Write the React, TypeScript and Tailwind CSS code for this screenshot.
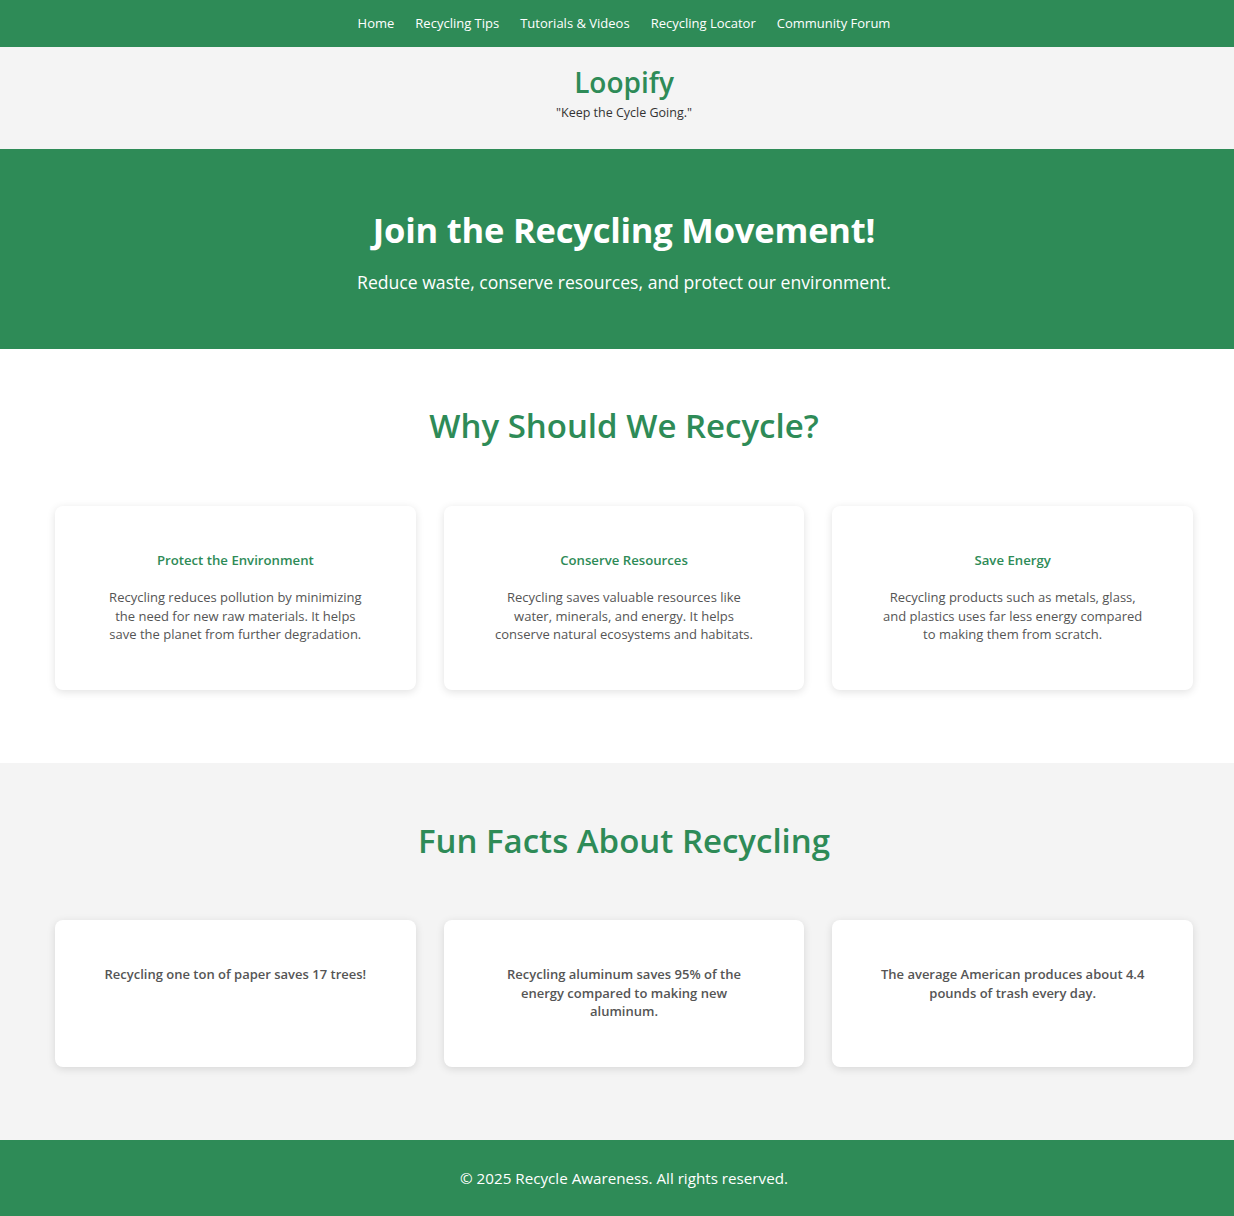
import React from "react";

const font = { fontFamily: '"Open Sans", "Noto Sans", sans-serif' };

const why = [
  {
    t: "Protect the Environment",
    l: ["Recycling reduces pollution by minimizing", "the need for new raw materials. It helps", "save the planet from further degradation."],
  },
  {
    t: "Conserve Resources",
    l: ["Recycling saves valuable resources like", "water, minerals, and energy. It helps", "conserve natural ecosystems and habitats."],
  },
  {
    t: "Save Energy",
    l: ["Recycling products such as metals, glass,", "and plastics uses far less energy compared", "to making them from scratch."],
  },
];

const facts = [
  ["Recycling one ton of paper saves 17 trees!"],
  ["Recycling aluminum saves 95% of the", "energy compared to making new", "aluminum."],
  ["The average American produces about 4.4", "pounds of trash every day."],
];

export default function App() {
  return (
    <div style={font} className="w-full overflow-x-hidden bg-white text-[#333]">
      <div className="w-[1248px]">
        <nav className="h-[47px] bg-[#2e8b57] flex items-center justify-center gap-[21px] text-white text-[13px] font-medium">
          {["Home", "Recycling Tips", "Tutorials & Videos", "Recycling Locator", "Community Forum"].map((n) => (
            <a key={n} href="#" className="leading-none">{n}</a>
          ))}
        </nav>
        <header className="h-[102px] bg-[#f4f4f4] flex flex-col items-center pt-[17px]">
          <h1 className="text-[28px] font-semibold text-[#2e8b57] leading-[36px]">Loopify</h1>
          <p className="text-[12.5px] text-[#333] mt-[4px] leading-[18px]">"Keep the Cycle Going."</p>
        </header>
        <section className="h-[200px] bg-[#2e8b57] flex flex-col items-center text-white pt-[59px]">
          <h2 className="text-[34.5px] font-bold leading-[44px] tracking-[-0.2px]">Join the Recycling Movement!</h2>
          <p className="text-[17.6px] mt-[18px] leading-[24px]">Reduce waste, conserve resources, and protect our environment.</p>
        </section>
        <section className="h-[414px] bg-white flex flex-col items-center pt-[56px] px-[55px]">
          <h2 className="text-[33px] font-semibold text-[#2e8b57] leading-[42px]">Why Should We Recycle?</h2>
          <div className="w-full grid grid-cols-3 gap-[28px] mt-[59px]">
            {why.map((c) => (
              <div key={c.t} className="h-[184px] bg-white rounded-[8px] shadow-[0_2px_8px_rgba(0,0,0,0.12)] flex flex-col items-center pt-[45px]">
                <h3 className="text-[13.2px] font-semibold text-[#2e8b57] leading-[18px]">{c.t}</h3>
                <p className="text-[13px] text-[#555] leading-[18.5px] mt-[19px] text-center">
                  {c.l.map((x) => (
                    <span key={x} className="block">{x}</span>
                  ))}
                </p>
              </div>
            ))}
          </div>
        </section>
        <section className="h-[377px] bg-[#f4f4f4] flex flex-col items-center pt-[57px] px-[55px]">
          <h2 className="text-[33px] font-semibold text-[#2e8b57] leading-[42px]">Fun Facts About Recycling</h2>
          <div className="w-full grid grid-cols-3 gap-[28px] mt-[58px]">
            {facts.map((f, i) => (
              <div key={i} className="h-[147px] bg-white rounded-[8px] shadow-[0_2px_8px_rgba(0,0,0,0.12)] flex flex-col items-center pt-[45px]">
                <p className="text-[13px] font-semibold text-[#555] leading-[18.5px] text-center">
                  {f.map((x) => (
                    <span key={x} className="block">{x}</span>
                  ))}
                </p>
              </div>
            ))}
          </div>
        </section>
        <footer className="h-[76px] bg-[#2e8b57] flex items-center justify-center text-white text-[15.2px]">
          © 2025 Recycle Awareness. All rights reserved.
        </footer>
      </div>
    </div>
  );
}
